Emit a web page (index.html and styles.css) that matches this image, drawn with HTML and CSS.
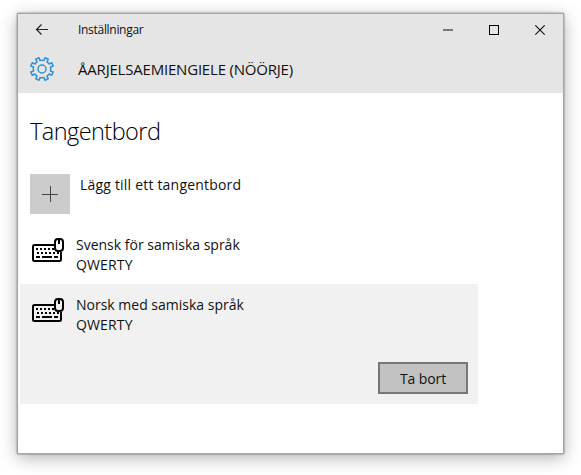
FILE: index.html
```
<!DOCTYPE html>
<html lang="sv">
<head>
<meta charset="utf-8">
<title>Inställningar</title>
<link rel="stylesheet" href="styles.css">
</head>
<body>
<svg width="0" height="0" class="defs">
  <symbol id="keyboard" viewBox="0 0 32 24">
    <path d="M22 7H2.500Q1 7 1 8.500V21.500Q1 23 2.500 23H27.500Q29 23 29 21.500V14" fill="none" stroke="#000" stroke-width="2"/>
    <path d="M4 11h2m2 0h2m2 0h2m2 0h2m2 0h2M5 15h2m2 0h2m2 0h2m2 0h2m2 0h2m2 0h2M4 19h4m2 0h10m2 0h4" fill="none" stroke="#000" stroke-width="2"/>
    <rect x="23" y="1" width="8" height="12" rx="3" fill="none" stroke="#000" stroke-width="2"/>
    <path d="M27 1v5" stroke="#000" stroke-width="2"/>
  </symbol>
</svg>
<main class="window">
  <header class="header">
    <div class="titlebar">
      <svg class="back" width="14" height="12" viewBox="0 0 14 12"><path d="M13 5.500H1.500M6.500 .5L1.500 5.500L6.500 10.500" fill="none" stroke="#222" stroke-width="1.200"/></svg>
      <span class="app">Inställningar</span>
      <div class="controls">
        <svg width="10" height="10"><path d="M0 5h10" stroke="#777" stroke-width="2"/></svg>
        <svg width="10" height="10"><rect x=".5" y=".5" width="9" height="9" fill="none" stroke="#000"/></svg>
        <svg width="10" height="10"><path d="M.3 .3L9.700 9.700M9.700 .3L.3 9.700" stroke="#111" stroke-width="1.100"/></svg>
      </div>
    </div>
    <div class="section">
      <svg class="gear" width="24" height="24" viewBox="0 0 24 24" fill="none" stroke="#3393d0" stroke-width="1.500" stroke-linejoin="round">
        <path d="M10 3.500L9 .8L5.800 2.200L7 4.900Q5.800 5.800 4.900 7L2.200 5.800L.8 9L3.500 10Q3.200 12 3.500 14L.8 15L2.200 18.200L4.900 17Q5.800 18.200 7 19.100L5.800 21.800L9 23.200L10 20.500Q12 20.900 14 20.500L15 23.200L18.200 21.800L17 19.100Q18.200 18.200 19.100 17L21.800 18.200L23.200 15L20.500 14Q20.800 12 20.500 10L23.200 9L21.800 5.800L19.100 7Q18.200 5.800 17 4.900L18.200 2.200L15 .8L14 3.500Q12 3.100 10 3.500Z"/>
        <circle cx="12" cy="12" r="4"/>
      </svg>
      <span class="language">ÅARJELSAEMIENGIELE (NÖÖRJE)</span>
    </div>
  </header>
  <section class="content">
    <h1>Tangentbord</h1>
    <div class="add">
      <div class="tile"><svg width="16" height="16"><path d="M0 8.500h16M8.500 0v16" stroke="#444"/></svg></div>
      <span class="add-label">Lägg till ett tangentbord</span>
    </div>
    <div class="item">
      <svg class="kb" width="32" height="24"><use href="#keyboard"/></svg>
      <div class="text"><div class="name">Svensk för samiska språk</div><div class="layout">QWERTY</div></div>
    </div>
    <div class="item selected">
      <svg class="kb" width="32" height="24"><use href="#keyboard"/></svg>
      <div class="text"><div class="name">Norsk med samiska språk</div><div class="layout">QWERTY</div></div>
      <button class="remove">Ta bort</button>
    </div>
  </section>
</main>
</body>
</html>
```
FILE: styles.css
```
* { box-sizing: border-box; }
body { margin: 0; padding: 13px 17px; height: 475px; overflow: hidden; background: #fff; color: #111; font-family: "Open Sans", "Noto Sans", sans-serif; font-size: 14px; line-height: 20px; white-space: nowrap; }
.defs { position: absolute; }
svg { display: block; flex: none; }
.window { width: 547px; height: 441px; border: 1px solid #70b3dc; background: #fff; box-shadow: 0 0 2px rgba(0,0,0,.45), 0 4px 16px rgba(0,0,0,.3); }
.header { height: 79px; background: #e5e5e5; }
.titlebar { height: 31px; display: flex; align-items: center; padding-left: 17px; }
.app { margin-left: 29px; font-size: 12px; letter-spacing: -.3px; }
.controls { display: flex; gap: 36px; margin: 0 18px 0 auto; }
.section { height: 48px; display: flex; align-items: center; padding-left: 12px; }
.language { margin-left: 24px; font-size: 15px; letter-spacing: -.2px; }
.content { padding: 0 2px; }
h1 { margin: 0; padding: 22px 0 0 10px; height: 81px; font-size: 23.500px; line-height: 32px; font-weight: 300; letter-spacing: -.55px; color: #000; }
.add { height: 50px; padding-left: 10px; display: flex; gap: 10px; }
.add-label { padding-top: 1px; letter-spacing: .2px; }
.tile { width: 40px; height: 40px; background: #ccc; display: flex; align-items: center; justify-content: center; }
.item { width: 458px; height: 60px; padding: 10px 10px 10px 12px; display: flex; gap: 12px; }
.text { padding-top: 1px; }
.layout { letter-spacing: .15px; }
.kb { margin-top: 4px; }
.selected { height: 120px; background: #f1f1f1; }
.remove { margin: auto 0 0 auto; width: 90px; height: 32px; padding: 2px 0 0; border: 2px solid #777; background: #c2c2c2; color: #111; font: inherit; letter-spacing: -.1px; }
```
